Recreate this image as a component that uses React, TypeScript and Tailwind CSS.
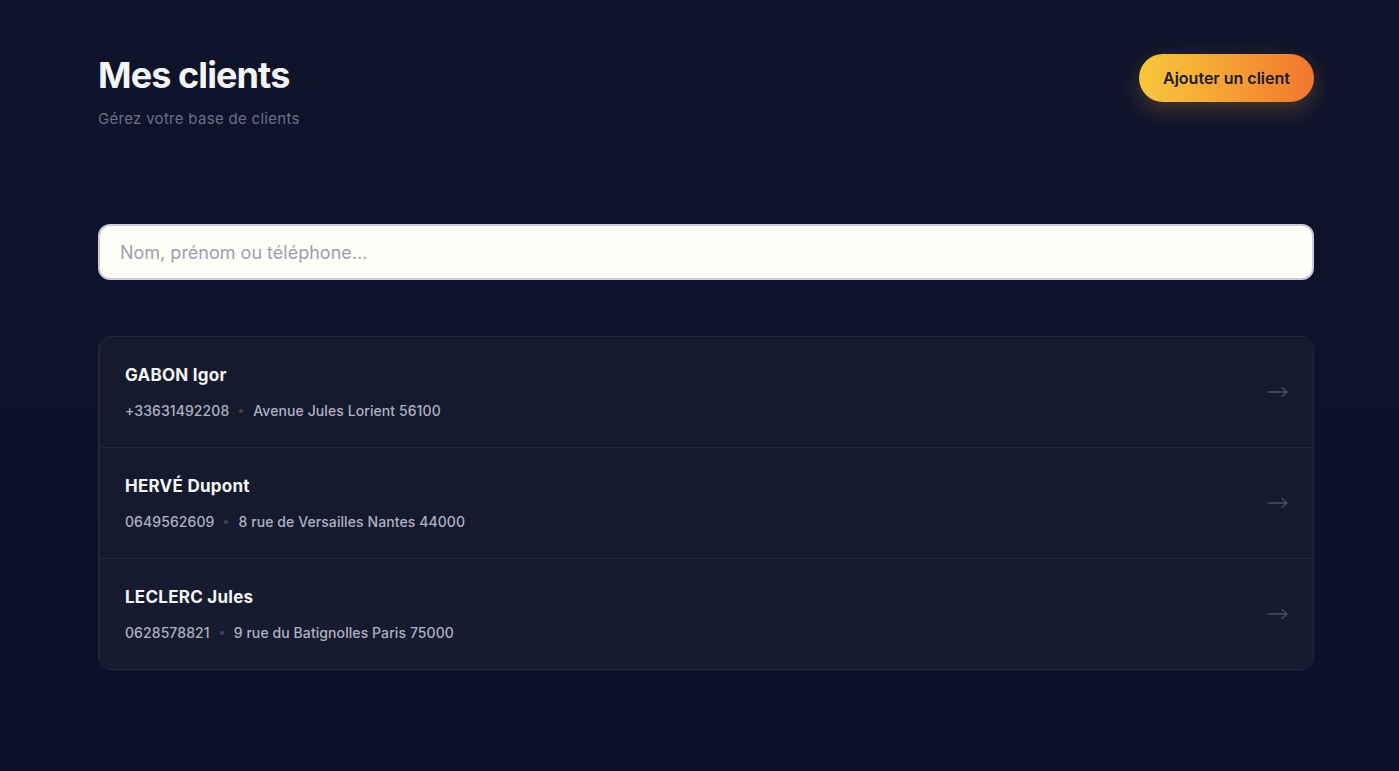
import React from "react";

const clients = [
  { name: "GABON Igor", phone: "+33631492208", address: "Avenue Jules Lorient 56100" },
  { name: "HERVÉ Dupont", phone: "0649562609", address: "8 rue de Versailles Nantes 44000" },
  { name: "LECLERC Jules", phone: "0628578821", address: "9 rue du Batignolles Paris 75000" },
];

export default function App() {
  return (
    <div
      className="min-h-[771px] w-full bg-gradient-to-b from-[#10142b] to-[#0b102a] text-white"
      style={{ fontFamily: "Inter, 'Noto Sans', sans-serif" }}
    >
      <div className="pl-[98px] pr-[85px] pt-[54px]">
        <div className="flex items-start justify-between">
          <div>
            <h1 className="mt-[1px] text-[36px] font-bold leading-[40px] tracking-[-0.025em] text-[#f3f4f6]">
              Mes clients
            </h1>
            <p className="mt-[14px] text-[15px] leading-5 tracking-[0.02em] text-[#6b7185]">Gérez votre base de clients</p>
          </div>
          <button className="h-[48px] w-[175px] rounded-full bg-gradient-to-r from-[#f7c83b] to-[#f1762f] text-[16px] font-semibold text-[#1a1b2b] shadow-[0_8px_22px_rgba(240,160,50,0.25)]">
            Ajouter un client
          </button>
        </div>

        <div className="mt-[61px] text-[16px] font-medium leading-5 text-[#12172f]">Rechercher un client</div>

        <div className="mt-[14px]">
          <input
            placeholder="Nom, prénom ou téléphone..."
            className="h-[56px] w-full rounded-[12px] border-2 border-[#c9ccd8] bg-[#fffdf8] px-[20px] text-[18px] text-[#1f2937] outline-none placeholder:text-[#9ca0ad]"
          />
        </div>

        <div className="mt-[56px] overflow-hidden rounded-[12px] border border-[#242839] bg-[#151a2c]">
          {clients.map((c, i) => (
            <div
              key={c.name}
              className={`flex items-center justify-between border-l border-[#22273a] pl-[25px] pr-[24px] ${
                i > 0 ? "border-t border-t-[#22273a]" : ""
              } ${i === 0 ? "bg-[#151a2d]" : i === 1 ? "bg-[#161a2e]" : "bg-[#171b2f]"}`}
            >
              <div className="py-[26px]">
                <div className="text-[17px] font-bold leading-6 tracking-[0.015em] text-[#f5f6f8]">{c.name}</div>
                <div className="mt-[14px] flex items-center text-[14px] font-medium leading-5 tracking-[0.006em] text-[#aeb2c1]">
                  <span>{c.phone}</span>
                  <span className="mx-[10px] h-[4px] w-[4px] rounded-full bg-[#3f4458]" />
                  <span>{c.address}</span>
                </div>
              </div>
              <svg width="22" height="12" viewBox="0 0 22 12" fill="none" className="text-[#4a4f66]">
                <path d="M1 6h19M15 1.5L20 6l-5 4.5" stroke="currentColor" strokeWidth="1.3" strokeLinecap="round" strokeLinejoin="round" />
              </svg>
            </div>
          ))}
        </div>
      </div>
    </div>
  );
}
